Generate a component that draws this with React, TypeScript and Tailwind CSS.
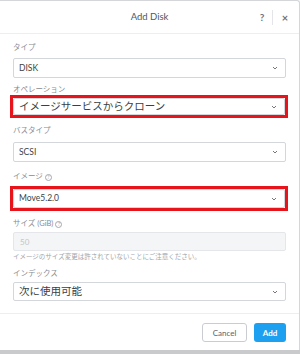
import React from 'react';

const font = { fontFamily: "Lato, 'Noto Sans CJK JP', sans-serif" };

function Chevron() {
  return (
    <svg width="6" height="4" viewBox="0 0 6 4" className="shrink-0">
      <path d="M1 1 L3 3 L5 1" fill="none" stroke="#777" strokeWidth="1" />
    </svg>
  );
}

function Label({ text, help, mt }: { text: string; help?: boolean; mt: string }) {
  return (
    <div className={`${mt} flex h-[10px] items-center gap-[2px] text-[7.5px] leading-[10px] text-[#878c93]`}>
      <span>{text}</span>
      {help && (
        <span className="flex h-[7px] w-[7px] items-center justify-center rounded-full border border-[#a3a8ae] text-[5px] leading-none text-[#a3a8ae]">
          ?
        </span>
      )}
    </div>
  );
}

function Select({ value, mt, h, big }: { value: string; mt: string; h: string; big?: boolean }) {
  return (
    <div
      className={`${mt} ${h} flex items-center justify-between rounded-[2px] border border-[#d3d7dc] bg-white pl-[5px] pr-[7px] text-[#3a3f45] ${big ? 'text-[10.5px]' : 'text-[8.5px]'}`}
    >
      <span>{value}</span>
      <Chevron />
    </div>
  );
}

export default function App() {
  return (
    <div style={font} className="flex h-[354px] w-[300px] flex-col overflow-hidden bg-white">
      <div className="flex flex-1 flex-col rounded-tr-[3px] border-t border-r border-[#d4d6d9]">
        <div className="relative flex h-[33px] shrink-0 items-center justify-center border-b border-[#eceef0]">
          <span className="text-[9.5px] text-[#4e5966]">Add Disk</span>
          <div className="absolute right-[9px] top-0 flex h-full items-center">
            <span className="w-[10px] text-center text-[10px] font-bold text-[#6b737c]">?</span>
            <div className="ml-[5px] mr-[7px] h-[15px] w-px bg-[#e3e5e8]" />
            <span className="w-[10px] text-center text-[11px] font-bold leading-none text-[#6b737c]">×</span>
          </div>
        </div>

        <div className="flex flex-col px-[13px]">
          <Label text="タイプ" mt="mt-[9px]" />
          <Select value="DISK" mt="mt-[5px]" h="h-[20px]" />

          <Label text="オペレーション" mt="mt-[7px]" />
          <div className="ml-[-3px] mr-[-2px] border-[3px] border-[#e8141c]">
            <Select value="イメージサービスからクローン" mt="mt-0" h="h-[17px]" big />
          </div>

          <Label text="バスタイプ" mt="mt-[8px]" />
          <Select value="SCSI" mt="mt-[6px]" h="h-[20px]" />

          <Label text="イメージ" help mt="mt-[10px]" />
          <div className="mt-[4px] ml-[-3px] mr-[-2px] border-[3px] border-[#e8141c]">
            <Select value="Move5.2.0" mt="mt-0" h="h-[19px]" />
          </div>

          <Label text="サイズ (GiB)" help mt="mt-[8px]" />
          <div className="mt-[3px] flex h-[19px] items-center rounded-[2px] border border-[#e4e6e9] bg-[#f4f5f6] pl-[6px] text-[8px] text-[#c3c6ca]">
            50
          </div>
          <div className="mt-[1px] h-[10px] text-[6.5px] leading-[10px] text-[#a0a5ab]">
            イメージのサイズ変更は許されていないことにご注意ください。
          </div>

          <Label text="インデックス" mt="mt-[7px]" />
          <Select value="次に使用可能" mt="mt-[3px]" h="h-[19px]" big />
        </div>

        <div className="mt-[12px] flex flex-1 items-start justify-end gap-[7px] border-t border-[#eceef0] px-[13px] pt-[9px]">
          <button className="flex h-[19px] w-[45px] items-center justify-center rounded-[3px] border border-[#c9cdd2] bg-white text-[8px] text-[#5b636c]">
            Cancel
          </button>
          <button className="flex h-[19px] w-[32px] items-center justify-center rounded-[3px] bg-[#1ea0f0] text-[8px] font-bold text-white">
            Add
          </button>
        </div>
      </div>
      <div className="h-[4px] shrink-0 bg-[#c9cacc]" />
    </div>
  );
}
